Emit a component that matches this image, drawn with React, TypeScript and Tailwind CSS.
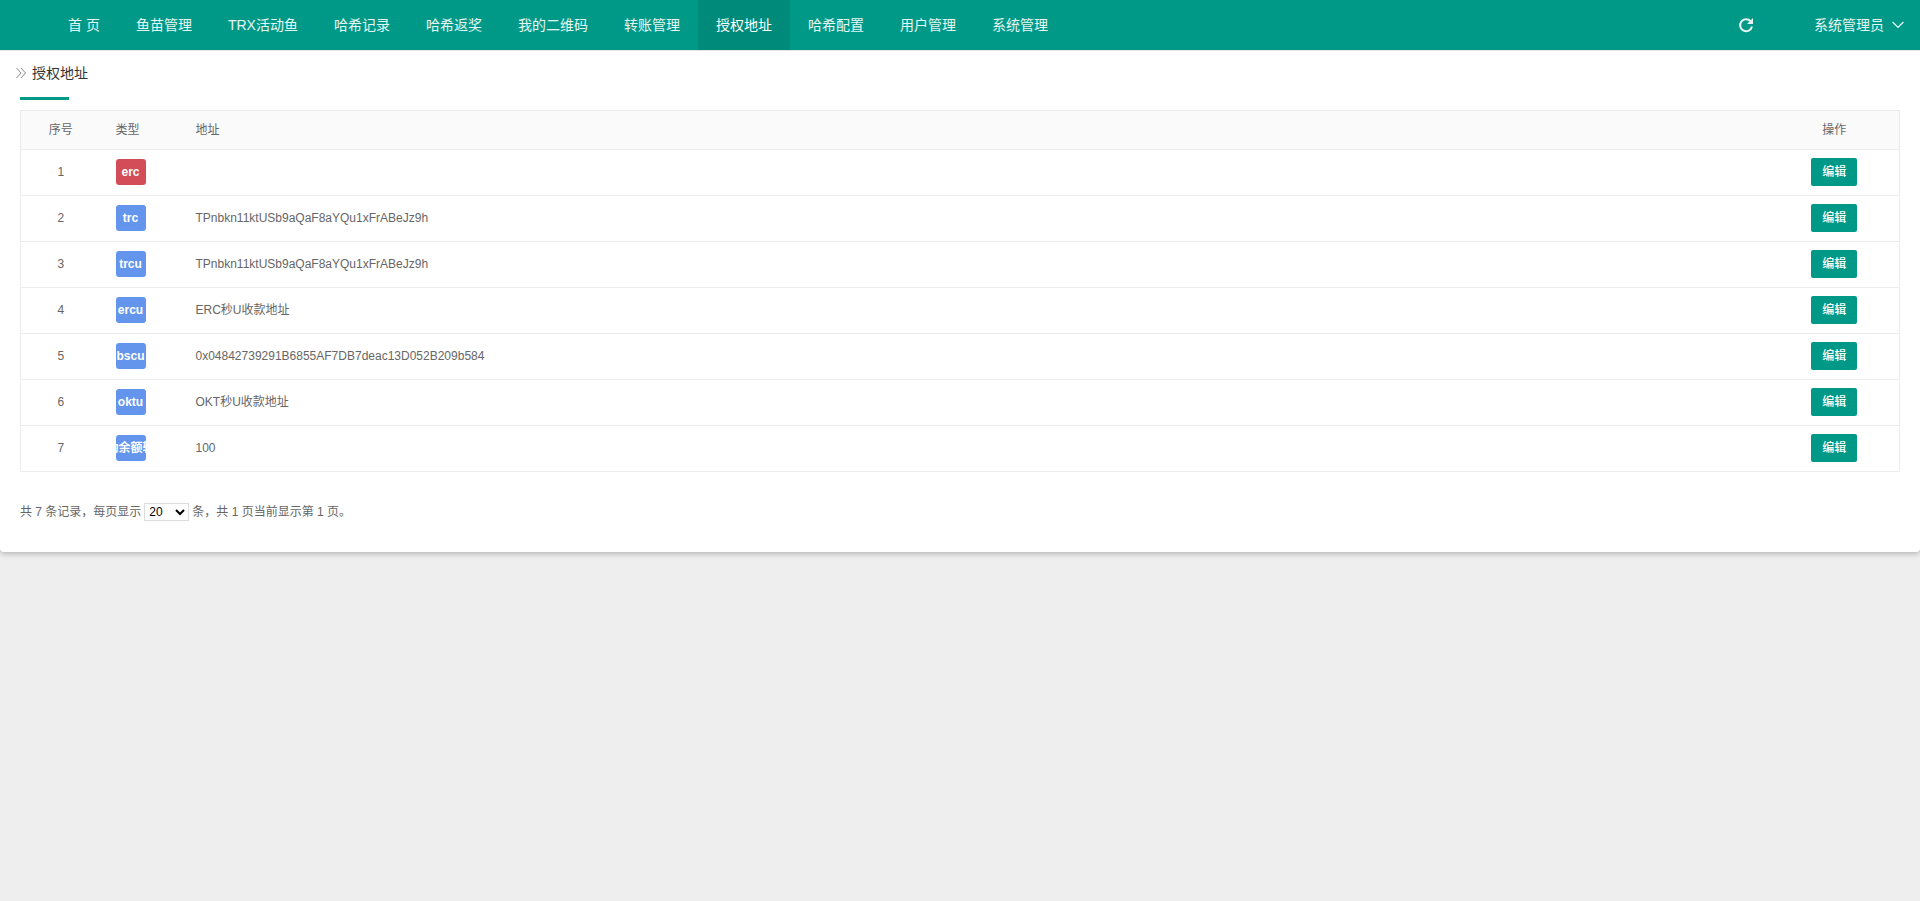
import { useState } from 'react'

interface AddressRow {
  id: number
  type: string
  address: string
  danger?: boolean
}

const menus = ['首 页', '鱼苗管理', 'TRX活动鱼', '哈希记录', '哈希返奖', '我的二维码', '转账管理', '授权地址', '哈希配置', '用户管理', '系统管理']

const rows: AddressRow[] = [
  { id: 1, type: 'erc', address: '', danger: true },
  { id: 2, type: 'trc', address: 'TPnbkn11ktUSb9aQaF8aYQu1xFrABeJz9h' },
  { id: 3, type: 'trcu', address: 'TPnbkn11ktUSb9aQaF8aYQu1xFrABeJz9h' },
  { id: 4, type: 'ercu', address: 'ERC秒U收款地址' },
  { id: 5, type: 'bscu', address: '0x04842739291B6855AF7DB7deac13D052B209b584' },
  { id: 6, type: 'oktu', address: 'OKT秒U收款地址' },
  { id: 7, type: '动余额转', address: '100' },
]

function RefreshIcon() {
  return (
    <svg width="16" height="16" viewBox="0 0 16 16" fill="none">
      <path d="M12.6 4.2A6 6 0 1 0 14 9.6" stroke="currentColor" strokeWidth="2" />
      <path d="M15 1v6H9z" fill="currentColor" />
    </svg>
  )
}

function Header() {
  return (
    <header className="relative z-10 flex h-[50px] items-center justify-between bg-[#009987] pl-[50px] text-sm text-white/90">
      <nav className="flex h-full">
        {menus.map(name => (
          <a
            key={name}
            href="#"
            className={
              name === '授权地址'
                ? 'flex h-full items-center bg-[#008a7a] px-[18px] text-white'
                : 'flex h-full items-center px-[18px] hover:text-white'
            }
          >
            {name}
          </a>
        ))}
      </nav>
      <div className="flex items-center gap-[60px] pr-4">
        <button aria-label="刷新">
          <RefreshIcon />
        </button>
        <button className="flex items-center gap-2">
          系统管理员
          <svg width="12" height="8" viewBox="0 0 12 8" fill="none" stroke="currentColor" strokeWidth="1.3">
            <path d="M.6 1 6 6.4 11.4 1" />
          </svg>
        </button>
      </div>
    </header>
  )
}

export default function App() {
  const [pageSize, setPageSize] = useState('20')

  return (
    <div className="min-h-screen bg-[#eee] font-['Liberation_Sans','Noto_Sans_CJK_SC',sans-serif] text-xs text-[#666]">
      <Header />

      <main className="rounded-b border-t border-[#e5e5e5] bg-white pb-[30px] shadow-[0_1px_6px_rgba(0,0,0,0.3)]">
        <div className="flex h-[46px] items-center gap-1.5 pb-0.5 pl-4">
          <svg width="10" height="12" viewBox="0 0 10 12" fill="none" stroke="#888">
            <path d="M.5 1 5 6 .5 11M5 1l4.5 5L5 11" />
          </svg>
          <h1 className="text-sm text-[#333]">授权地址</h1>
        </div>

        <div className="px-5">
          <div className="mb-2.5 h-[3px] w-[49px] bg-[#009987]" />

          <table className="w-full table-fixed border-collapse border border-[#ebebeb]">
            <thead>
              <tr className="h-[39px] border-b border-[#ebebeb] bg-[#fafafa]">
                <th className="w-20 font-normal">序号</th>
                <th className="w-20 px-[15px] text-left font-normal">类型</th>
                <th className="px-[15px] text-left font-normal">地址</th>
                <th className="w-[130px] font-normal">操作</th>
              </tr>
            </thead>
            <tbody>
              {rows.map(row => (
                <tr key={row.id} className="h-[46px] border-b border-[#ebebeb]">
                  <td className="pb-0.5 text-center">{row.id}</td>
                  <td className="px-[15px] pb-0.5">
                    <span
                      className={`flex h-[26px] w-[30px] items-center justify-center overflow-hidden rounded-[3px] font-bold whitespace-nowrap text-white ${
                        row.danger ? 'bg-[#d24d57]' : 'bg-[#6495ed]'
                      }`}
                    >
                      {row.type}
                    </span>
                  </td>
                  <td className="px-[15px] pb-0.5">{row.address}</td>
                  <td className="pb-0.5 text-center">
                    <button className="h-7 w-[46px] rounded-xs bg-[#009987] align-middle font-medium text-white">编辑</button>
                  </td>
                </tr>
              ))}
            </tbody>
          </table>

          <div className="mt-[30px] flex h-5 items-center gap-[3px] whitespace-pre">
            <label htmlFor="page-size">共 7 条记录，每页显示</label>
            <select
              id="page-size"
              value={pageSize}
              onChange={e => setPageSize(e.target.value)}
              className="h-[18px] w-[45px] border border-[#ddd] bg-white text-black"
            >
              <option>10</option>
              <option>20</option>
              <option>50</option>
              <option>100</option>
            </select>
            <span>条，共 1 页当前显示第 1 页。</span>
          </div>
        </div>
      </main>
    </div>
  )
}
